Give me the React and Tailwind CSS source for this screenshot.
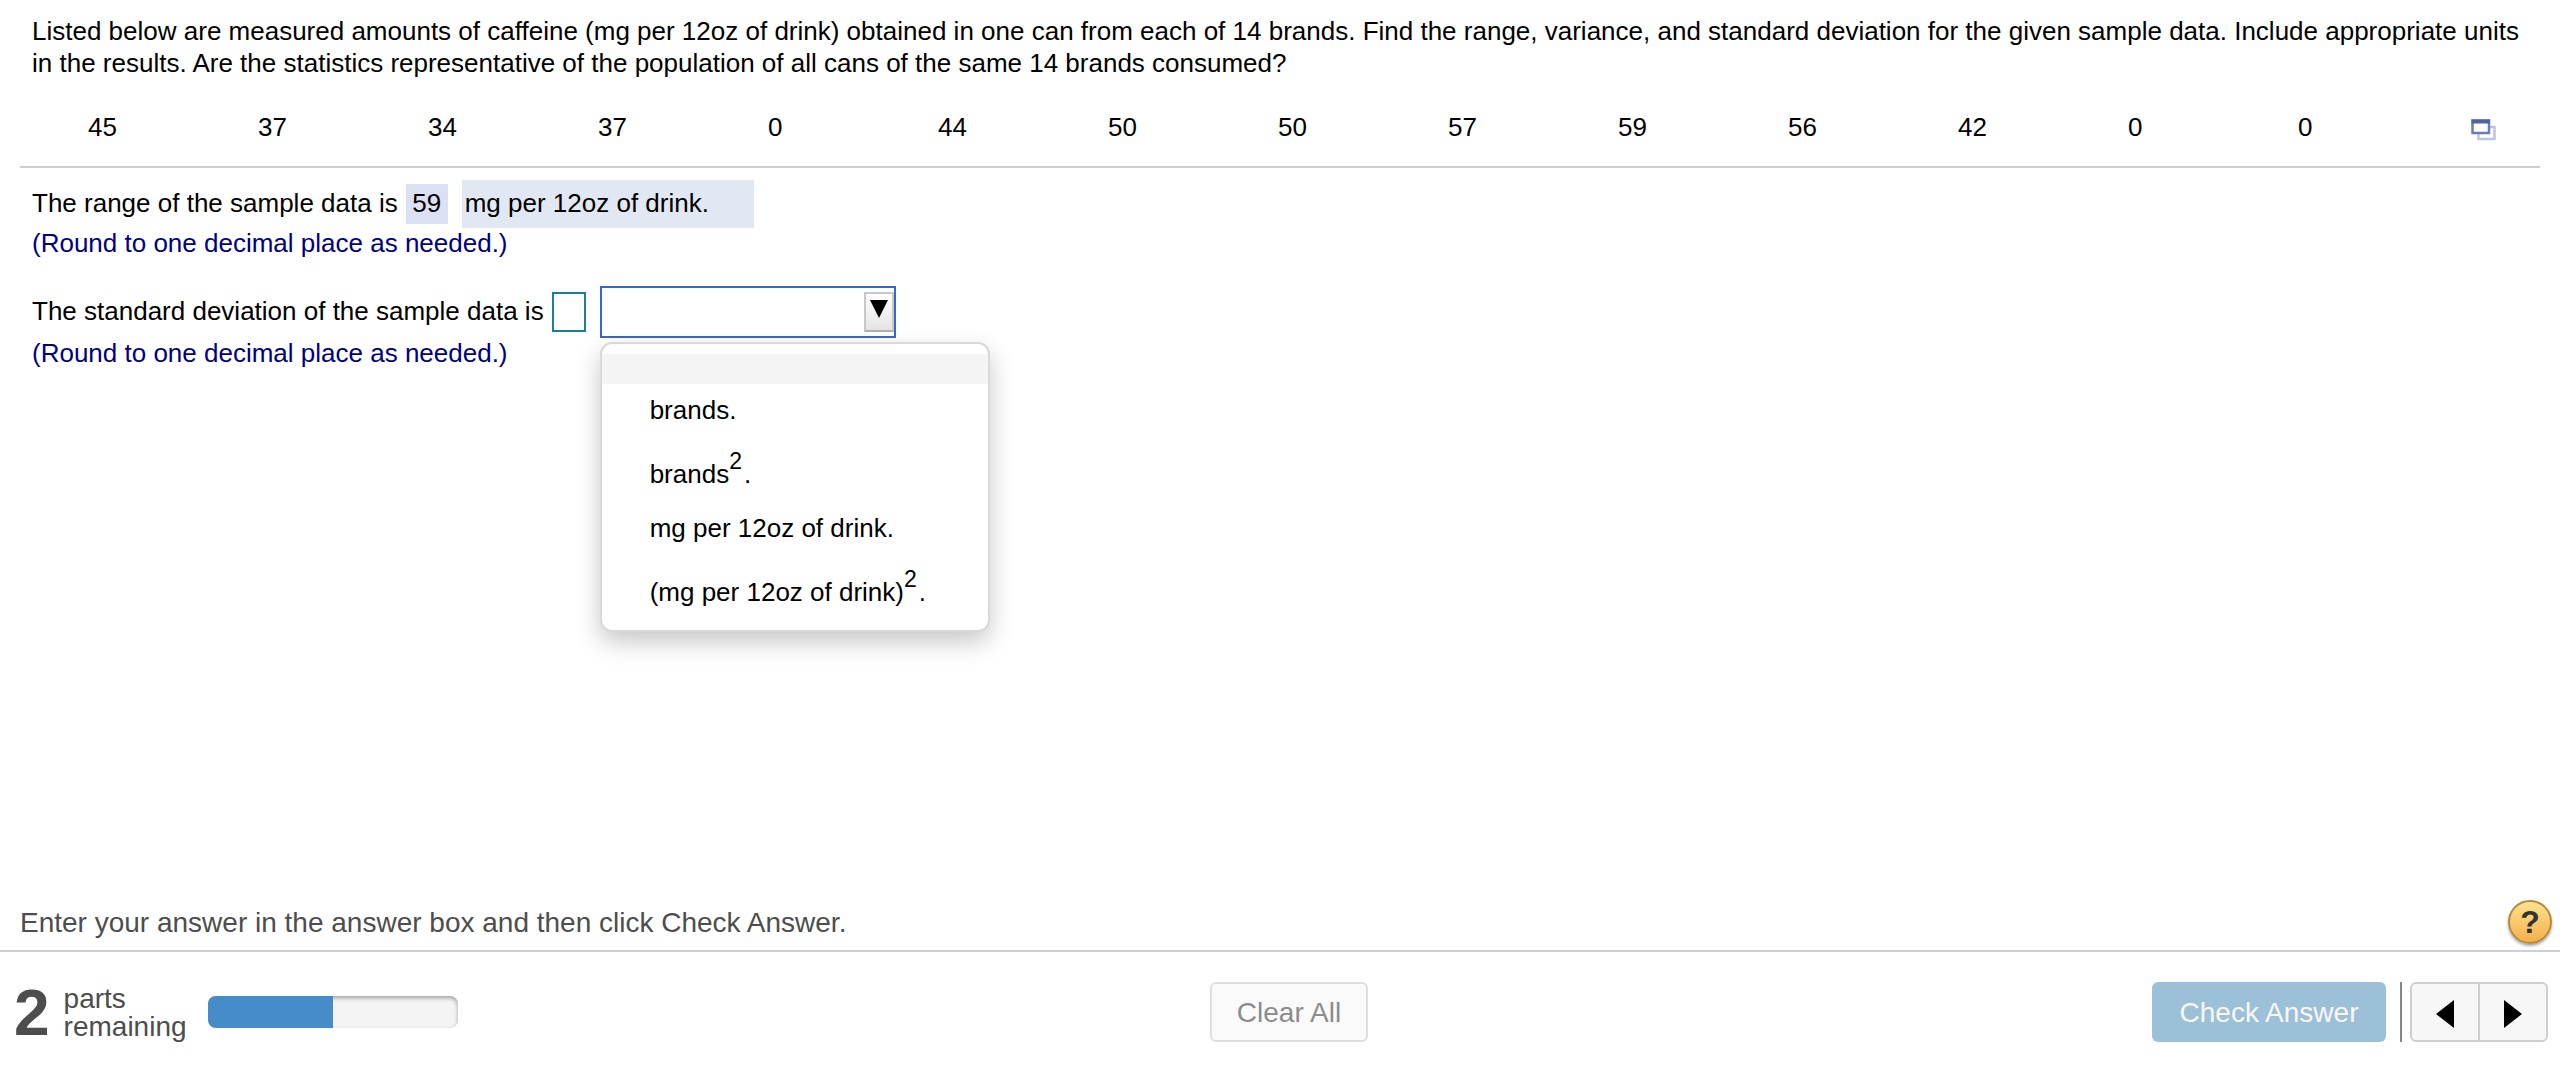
import React, { useState } from "react";

const SAMPLE = [45, 37, 34, 37, 0, 44, 50, 50, 57, 59, 56, 42, 0, 0];

function Squared() {
  return <sup className="relative -top-3.5 align-baseline text-[23px] leading-none">2</sup>;
}

const OPTIONS = [
  { id: "brands", height: "h-[54px]", label: "brands." },
  {
    id: "brands-squared",
    height: "h-16",
    label: (
      <>
        brands
        <Squared />
        <span className="pl-0.5">.</span>
      </>
    ),
  },
  { id: "mg", height: "h-[54px]", label: "mg per 12oz of drink." },
  {
    id: "mg-squared",
    height: "h-16",
    label: (
      <>
        (mg per 12oz of drink)
        <Squared />
        <span className="pl-0.5">.</span>
      </>
    ),
  },
];

function DataTable() {
  return (
    <div className="mx-5 flex items-start border-b-2 border-[#cbcfde] pb-[23px] pl-[68px]">
      <table className="w-full flex-1 table-fixed border-collapse text-left leading-8">
        <tbody>
          <tr>
            {SAMPLE.map((value, i) => (
              <td key={i} className="p-0">
                {value}
              </td>
            ))}
          </tr>
        </tbody>
      </table>
      <div className="w-[72px] shrink-0">
        <button type="button" aria-label="Open data in new window" className="block pt-2 pl-[3px]">
          <svg width="25" height="22" viewBox="0 0 25 22" fill="none">
            <rect x="7.5" y="8" width="16" height="12" fill="#fff" stroke="#bcc5e6" strokeWidth="2.5" />
            <rect x="1.5" y="1.5" width="16.5" height="12.5" fill="#fff" stroke="#6a7dba" strokeWidth="2.5" />
            <path d="M0.5 0.5h18.5v4H0.5z" fill="#4d63ac" />
          </svg>
        </button>
      </div>
    </div>
  );
}

function UnitPicker() {
  const [unit, setUnit] = useState("");
  return (
    <div className="relative ml-3.5">
      <div className="relative h-[52px] w-[296px]">
        <select
          id="unit"
          aria-label="Units"
          value={unit}
          onChange={(e) => setUnit(e.target.value)}
          className="block h-full w-full appearance-none border-2 border-[#3569c9] bg-white px-1 outline-none"
        >
          <option value=""></option>
        </select>
        <span className="pointer-events-none absolute top-1.5 right-0.5 flex h-10 w-[30px] justify-center border-2 border-[#c8c8c8] border-b-[#b0b0b0] bg-linear-to-b from-white to-[#e4e4e4] pt-1.5">
          <svg width="18" height="18" viewBox="0 0 18 18">
            <path d="M0 0h18L9 18z" fill="#000" />
          </svg>
        </span>
      </div>
      <ul
        role="listbox"
        aria-label="Unit choices"
        className="absolute top-14 left-0 z-10 w-[390px] rounded-xl border-2 border-[#d9d9d9] bg-white pt-2.5 pb-2.5 shadow-[0_10px_24px_rgba(0,0,0,0.22)]"
      >
        <li role="option" aria-selected="true" aria-label="blank" className="h-[30px] bg-[#f4f4f4]" />
        {OPTIONS.map((o) => (
          <li
            key={o.id}
            role="option"
            aria-selected="false"
            className={`flex items-end pb-3 pl-12 leading-8 whitespace-nowrap ${o.height}`}
          >
            <span>{o.label}</span>
          </li>
        ))}
      </ul>
    </div>
  );
}

function Answers() {
  return (
    <main className="px-8 pt-3">
      <div className="flex h-12 items-center">
        <span className="pb-0.5">The range of the sample data is</span>
        <span className="ml-2 flex h-10 w-[42px] items-center justify-center bg-[#dbe1f2] pb-0.5">59</span>
        <span className="ml-3.5 flex h-12 w-[292px] items-center bg-[#e2e8f3] pb-0.5 pl-[3px]">
          mg per 12oz of drink.
        </span>
      </div>
      <p className="-mt-px leading-8 text-[#000080]">(Round to one decimal place as needed.)</p>
      <div className="mt-[27px] flex h-[52px] items-center">
        <label htmlFor="deviation" className="pb-0.5">
          The standard deviation of the sample data is
        </label>
        <input
          id="deviation"
          type="text"
          className="ml-2 h-10 w-[34px] border-2 border-[#1a7f9e] bg-white px-1 outline-none"
        />
        <UnitPicker />
      </div>
      <p className="-mt-px leading-8 text-[#000080]">(Round to one decimal place as needed.)</p>
    </main>
  );
}

function HelpBar() {
  return (
    <div className="flex items-center justify-between border-b-2 border-[#cbcfde] pr-2 pb-1.5 pl-5">
      <p className="pt-0.5">Enter your answer in the answer box and then click Check Answer.</p>
      <button
        type="button"
        aria-label="Help"
        className="flex size-11 items-center justify-center rounded-full border-2 border-[#b58a3c] bg-linear-to-b from-[#fde28c] to-[#f2b04a] text-[32px] leading-none font-bold text-[#333] shadow-[0_2px_3px_rgba(0,0,0,0.35)]"
      >
        ?
      </button>
    </div>
  );
}

function Footer() {
  return (
    <footer className="flex h-[120px] items-center px-3">
      <div className="flex flex-1 items-center">
        <span className="pt-0.5 pl-0.5 text-[64px] leading-[60px] font-bold">2</span>
        <span className="ml-3.5 w-[122px] pt-0.5 leading-7">
          parts
          <br />
          remaining
        </span>
        <div
          role="progressbar"
          aria-label="Parts completed"
          aria-valuenow={50}
          aria-valuemin={0}
          aria-valuemax={100}
          className="ml-[22px] h-8 w-[250px] overflow-hidden rounded-lg bg-[#f4f4f4] shadow-[inset_0_2px_4px_rgba(0,0,0,0.35)]"
        >
          <div className="h-full w-1/2 bg-[#468cc9]" />
        </div>
      </div>
      <button
        type="button"
        className="ml-[18px] h-[60px] w-[158px] rounded-md border-2 border-[#dfdfdf] bg-[#fafafa] pt-0.5 text-[#8c8c8c]"
      >
        Clear All
      </button>
      <div className="flex flex-1 items-center justify-end">
        <button type="button" className="h-[60px] w-[234px] rounded-md bg-[#9dc0d9] pt-0.5 text-[#f8f8f8]">
          Check Answer
        </button>
        <span className="ml-3.5 h-[60px] w-0.5 bg-[#868686]" />
        <div className="ml-2 flex h-[60px] w-[138px] rounded-md border-2 border-[#cfcfcf] bg-[#f7f7f7]">
          <button
            type="button"
            aria-label="Previous"
            className="flex flex-1 items-center justify-center border-r-2 border-[#cfcfcf] pt-1"
          >
            <svg width="18" height="28" viewBox="0 0 18 28">
              <path d="M18 0v28L0 14z" fill="#000" />
            </svg>
          </button>
          <button type="button" aria-label="Next" className="flex flex-1 items-center justify-center pt-1">
            <svg width="18" height="28" viewBox="0 0 18 28">
              <path d="M0 0v28l18-14z" fill="#000" />
            </svg>
          </button>
        </div>
      </div>
    </footer>
  );
}

export default function App() {
  return (
    <div className="flex min-h-screen flex-col bg-white font-['Liberation_Sans',Arial,sans-serif] text-[26px] text-black">
      <p className="px-8 pt-[15px] pb-8 leading-8">
        Listed below are measured amounts of caffeine (mg per 12oz of drink) obtained in one can from each of 14 brands.
        Find the range, variance, and standard deviation for the given sample data. Include appropriate units in the
        results. Are the statistics representative of the population of all cans of the same 14 brands consumed?
      </p>
      <DataTable />
      <Answers />
      <div className="mt-auto text-[28px] text-[#4d4d4d]">
        <HelpBar />
        <Footer />
      </div>
    </div>
  );
}
